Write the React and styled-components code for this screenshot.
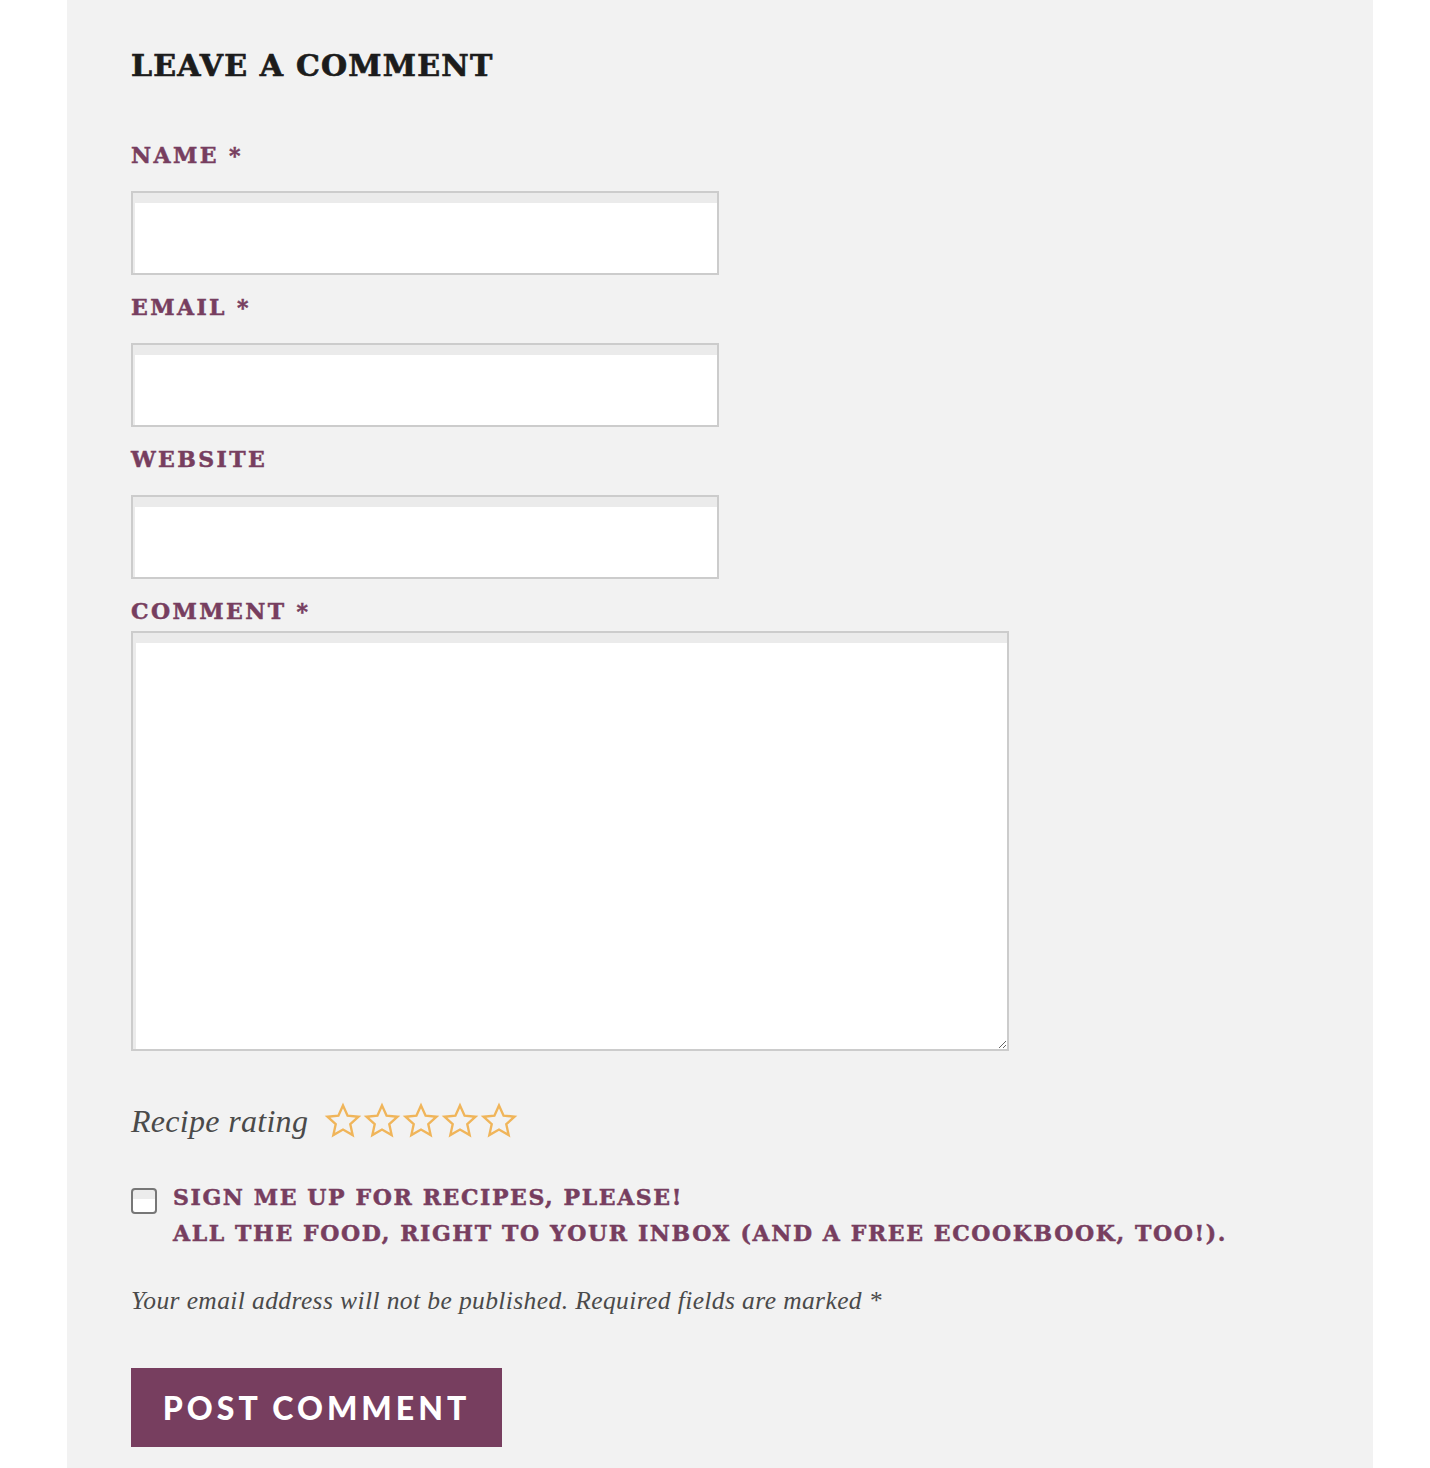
import React from "react";
import styled, { createGlobalStyle } from "styled-components";

const GlobalStyle = createGlobalStyle`
  body {
    margin: 0;
    background: #ffffff;
  }
`;

const purple = "#773e5f";

const Page = styled.div`
  width: 1430px;
  height: 1468px;
  overflow: hidden;
  background: #ffffff;
`;

const Panel = styled.section`
  margin-left: 67px;
  width: 1306px;
  min-height: 1468px;
  box-sizing: border-box;
  background: #f2f2f2;
  padding: 48px 64px 0;
`;

const Heading = styled.h3`
  margin: 0 0 58px;
  font-family: "DejaVu Serif", serif;
  font-weight: 700;
  font-size: 30px;
  line-height: 36px;
  letter-spacing: 1.2px;
  color: #1c1c1c;
  text-transform: uppercase;
  -webkit-text-stroke: 0.7px #1c1c1c;
`;

const Form = styled.form`
  display: flex;
  flex-direction: column;
  align-items: flex-start;
`;

const Field = styled.div`
  display: flex;
  flex-direction: column;
  margin-bottom: ${({ last }) => (last ? "0" : "19px")};
`;

const Label = styled.label`
  font-family: "DejaVu Serif", serif;
  font-weight: 700;
  font-size: 22px;
  line-height: 26px;
  letter-spacing: 2.4px;
  color: ${purple};
  text-transform: uppercase;
  -webkit-text-stroke: 0.5px ${purple};
`;

const TextInput = styled.input`
  margin-top: 23px;
  width: 588px;
  height: 84px;
  box-sizing: border-box;
  border: 2px solid #cccccc;
  background: #ffffff;
  box-shadow: inset 2px 10px 0 #ebebeb;
  outline: none;
  padding: 0 12px;
`;

const TextArea = styled.textarea`
  margin-top: 7px;
  width: 878px;
  height: 420px;
  box-sizing: border-box;
  border: 2px solid #cccccc;
  background: #ffffff;
  box-shadow: inset 3px 10px 0 #ebebeb;
  outline: none;
  padding: 12px;
  resize: both;
  display: block;
`;

const RatingRow = styled.div`
  margin-top: 50px;
  height: 40px;
  display: flex;
  align-items: center;
  gap: 16px;
`;

const ItalicText = styled.span`
  font-family: "Liberation Serif", serif;
  font-style: italic;
  font-size: ${({ size }) => size || 25.5}px;
  letter-spacing: ${({ spacing }) => spacing || 0}px;
  color: #4a4a4a;
`;

const Stars = styled.div`
  display: flex;
  gap: 1px;
`;

const Star = () => (
  <svg width="38" height="38" viewBox="0 0 24 24">
    <polygon
      points="12,2.2 14.9,8.6 21.8,9.3 16.6,14 18.1,20.9 12,17.4 5.9,20.9 7.4,14 2.2,9.3 9.1,8.6"
      fill="none"
      stroke="#f0b55a"
      strokeWidth="1.5"
      strokeLinejoin="miter"
    />
  </svg>
);

const OptinRow = styled.div`
  margin-top: 38px;
  display: flex;
  align-items: flex-start;
  gap: 16px;
`;

const Checkbox = styled.input`
  appearance: none;
  margin: 9px 0 0;
  width: 26px;
  height: 26px;
  box-sizing: border-box;
  border: 2px solid #777777;
  border-radius: 4px;
  background: linear-gradient(#ececec 40%, #ffffff 40%);
  flex-shrink: 0;
`;

const OptinText = styled.div`
  font-family: "DejaVu Serif", serif;
  font-weight: 700;
  font-size: 22px;
  line-height: 36px;
  letter-spacing: 1.6px;
  color: ${purple};
  text-transform: uppercase;
  -webkit-text-stroke: 0.5px ${purple};
`;

const Note = styled.p`
  margin: 35px 0 0;
  line-height: 30px;
`;

const SubmitButton = styled.button`
  margin-top: 49px;
  width: 371px;
  height: 79px;
  border: none;
  background: ${purple};
  color: #ffffff;
  font-family: "Lato", sans-serif;
  font-weight: 900;
  font-size: 32px;
  letter-spacing: 4px;
  text-transform: uppercase;
  cursor: pointer;
`;

const fields = [
  { name: "Name", required: true },
  { name: "Email", required: true },
  { name: "Website", required: false },
];

const App = () => {
  return (
    <Page>
      <GlobalStyle />
      <Panel>
        <Heading>Leave a Comment</Heading>
        <Form onSubmit={(e) => e.preventDefault()}>
          {fields.map((f) => (
            <Field key={f.name}>
              <Label>
                {f.name}
                {f.required ? " *" : ""}
              </Label>
              <TextInput type="text" />
            </Field>
          ))}
          <Field last>
            <Label>Comment *</Label>
            <TextArea />
          </Field>
          <RatingRow>
            <ItalicText size={32} spacing={0.3}>
              Recipe rating
            </ItalicText>
            <Stars>
              {[1, 2, 3, 4, 5].map((n) => (
                <Star key={n} />
              ))}
            </Stars>
          </RatingRow>
          <OptinRow>
            <Checkbox type="checkbox" />
            <OptinText>
              Sign me up for recipes, please!
              <br />
              All the food, right to your inbox (and a free eCookbook, too!).
            </OptinText>
          </OptinRow>
          <Note>
            <ItalicText spacing={0.4}>
              Your email address will not be published. Required fields are
              marked *
            </ItalicText>
          </Note>
          <SubmitButton type="submit">Post Comment</SubmitButton>
        </Form>
      </Panel>
    </Page>
  );
};

export default App;
